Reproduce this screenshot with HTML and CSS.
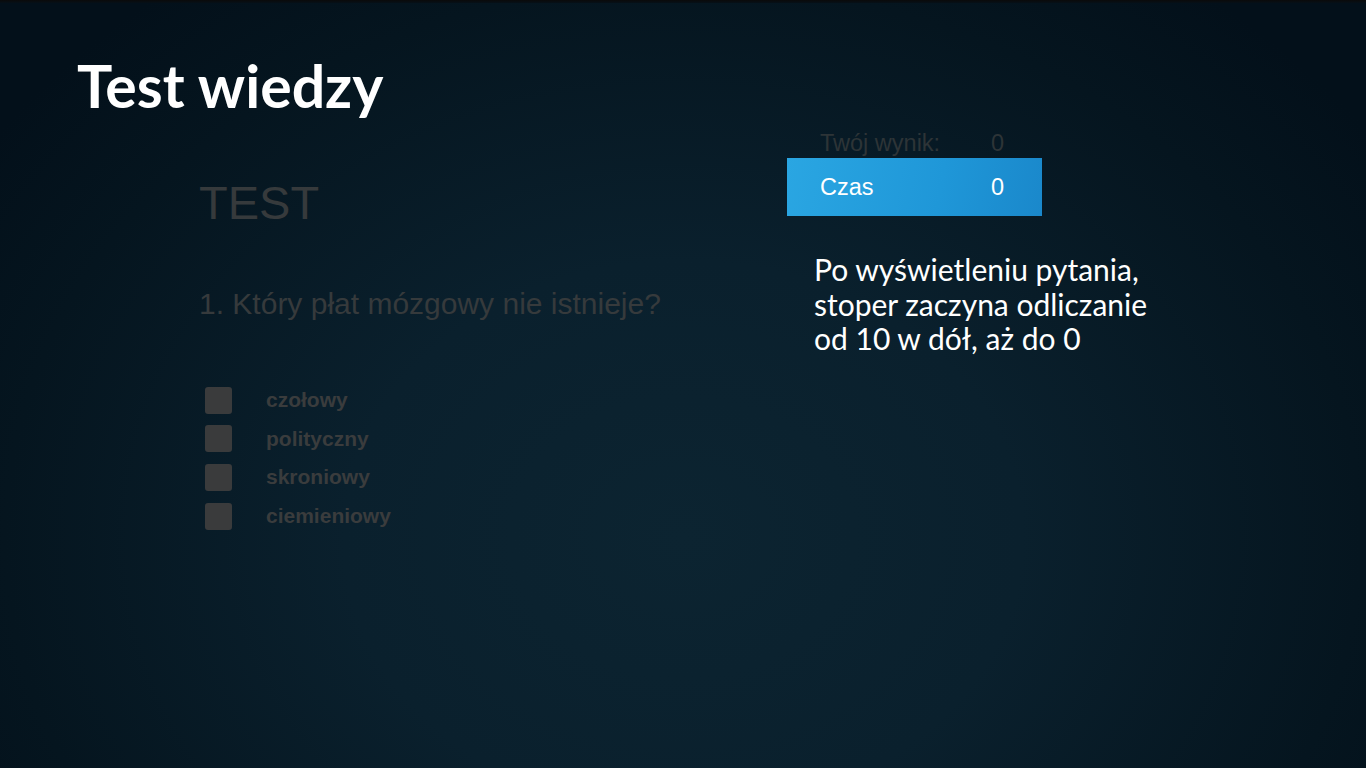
FILE: index.html
```html
<!DOCTYPE html>
<html lang="pl">
<head>
<meta charset="utf-8">
<title>Test wiedzy</title>
<link rel="stylesheet" href="styles.css">
</head>
<body>
<div class="slide">
  <div class="topbar"></div>
  <h1 class="title">Test wiedzy</h1>
  <div class="content">
    <div class="shot">
      <div class="shot-heading">TEST</div>
      <div class="shot-question">1. Który płat mózgowy nie istnieje?</div>
      <ul class="answers">
        <li class="answer"><span class="box"></span><span class="label">czołowy</span></li>
        <li class="answer"><span class="box"></span><span class="label">polityczny</span></li>
        <li class="answer"><span class="box"></span><span class="label">skroniowy</span></li>
        <li class="answer"><span class="box"></span><span class="label">ciemieniowy</span></li>
      </ul>
    </div>
    <div class="side">
      <div class="score-row"><span class="k">Twój wynik:</span><span class="v">0</span></div>
      <div class="time-row"><span class="k">Czas</span><span class="v">0</span></div>
      <p class="note">Po wyświetleniu pytania,<br>stoper zaczyna odliczanie<br>od 10 w dół, aż do 0</p>
    </div>
  </div>
</div>
</body>
</html>
```
FILE: styles.css
```css
html, body {
  margin: 0;
  padding: 0;
}
body {
  width: 1366px;
  height: 768px;
  overflow: hidden;
  background: #071722;
}
.slide {
  position: relative;
  width: 1366px;
  height: 768px;
  background: radial-gradient(ellipse 62% 90% at 50% 70%, #0c2431 0%, #0a202d 40%, #05151f 80%, #03101a 100%);
  display: flex;
  flex-direction: column;
}
.topbar {
  height: 3px;
  background: linear-gradient(#0a0a0a, #061018);
}
.title {
  margin: 48px 0 0 77px;
  font-family: Lato, sans-serif;
  font-weight: 700;
  font-size: 59px;
  line-height: 70px;
  color: #ffffff;
}
.content {
  display: flex;
  margin-top: 9px;
}
.shot {
  margin-left: 199px;
  width: 588px;
  padding-top: 47px;
  font-family: "Liberation Sans", Arial, sans-serif;
  color: #363a3c;
}
.shot-heading {
  font-size: 47px;
  line-height: 52px;
}
.shot-question {
  margin-top: 58px;
  font-size: 30px;
  line-height: 34px;
}
.answers {
  list-style: none;
  margin: 60px 0 0 6px;
  padding: 0;
}
.answer {
  display: flex;
  align-items: center;
  height: 38.6px;
}
.box {
  width: 27px;
  height: 27px;
  border-radius: 3px;
  background: #3a3b3c;
}
.label {
  margin-left: 34px;
  font-weight: 700;
  font-size: 21px;
  color: #3a3c3d;
}
.side {
  width: 380px;
}
.score-row, .time-row {
  display: flex;
  width: 255px;
  box-sizing: border-box;
  padding-left: 33px;
  font-family: "Liberation Sans", Arial, sans-serif;
  font-size: 23.5px;
}
.score-row {
  height: 30px;
  align-items: center;
  color: #2d3437;
  margin-top: -2px;
}
.time-row {
  height: 58px;
  align-items: center;
  color: #ffffff;
  background: linear-gradient(100deg, #2aa6e2 0%, #1f97d8 60%, #1a88cb 100%);
}
.k {
  width: 171px;
}
.note {
  margin: 36px 0 0 27px;
  font-family: Lato, sans-serif;
  font-size: 30px;
  line-height: 34.5px;
  color: #ffffff;
}
```
